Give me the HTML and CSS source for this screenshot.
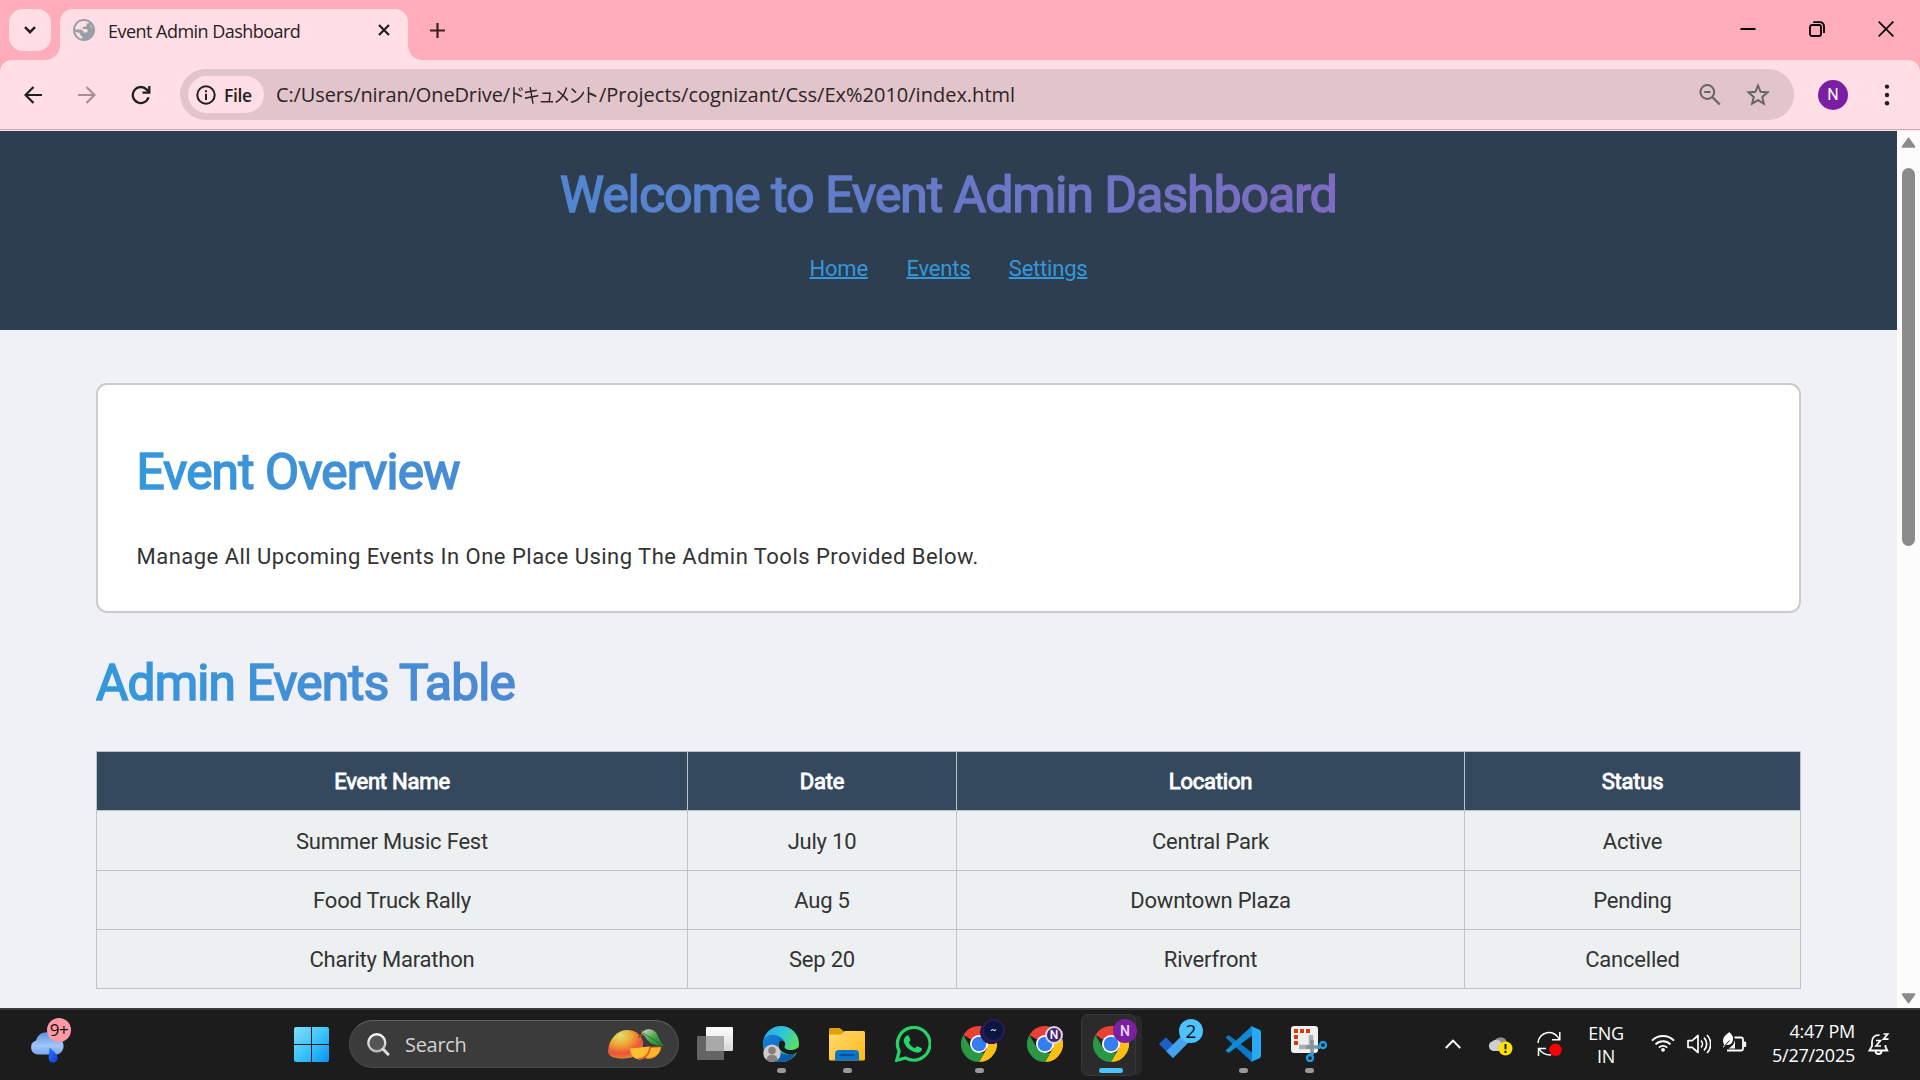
FILE: index.html
```html
<!DOCTYPE html>
<html lang="en">
<head>
<meta charset="utf-8">
<title>Event Admin Dashboard</title>
<link rel="stylesheet" href="styles.css">
</head>
<body>
<svg width="0" height="0" class="defs">
  <defs>
    <linearGradient id="winA" x1="0" y1="0" x2="1" y2="1"><stop offset="0" stop-color="#83dcfb"/><stop offset=".5" stop-color="#3cc5fb"/><stop offset="1" stop-color="#0a93f5"/></linearGradient>
    <linearGradient id="cloud" x1="0" y1="0" x2="0" y2="1"><stop offset="0" stop-color="#5f8fe0"/><stop offset=".6" stop-color="#a3c6f8"/><stop offset="1" stop-color="#7ba6ec"/></linearGradient>
    <linearGradient id="drop" x1="0" y1="0" x2="1" y2="1"><stop offset="0" stop-color="#1d7df5"/><stop offset="1" stop-color="#1636e8"/></linearGradient>
    <radialGradient id="mango" cx=".35" cy=".2" r=".85"><stop offset="0" stop-color="#dfe070"/><stop offset=".4" stop-color="#efa530"/><stop offset=".75" stop-color="#f0503c"/><stop offset="1" stop-color="#e0902c"/></radialGradient>
    <linearGradient id="leaf" x1="0" y1="0" x2="1" y2="1"><stop offset="0" stop-color="#d5dccb"/><stop offset=".5" stop-color="#4aa548"/><stop offset="1" stop-color="#167a2c"/></linearGradient>
    <linearGradient id="edgeA" x1="0" y1="0" x2="1" y2=".6"><stop offset="0" stop-color="#2aa5ec"/><stop offset=".5" stop-color="#30c6d8"/><stop offset="1" stop-color="#63e34a"/></linearGradient>
    <linearGradient id="edgeB" x1="0" y1="0" x2="1" y2="1"><stop offset="0" stop-color="#1486dc"/><stop offset="1" stop-color="#0b4ba0"/></linearGradient>
    <linearGradient id="fold" x1="0" y1="0" x2="1" y2="1"><stop offset="0" stop-color="#ffdc74"/><stop offset="1" stop-color="#fcb914"/></linearGradient>
    <linearGradient id="tvA" x1="0" y1="0" x2="0" y2="1"><stop offset="0" stop-color="#fff"/><stop offset="1" stop-color="#d6d6d6"/></linearGradient>
    <linearGradient id="glass" x1="0" y1="0" x2="0" y2="1"><stop offset="0" stop-color="#fafafa"/><stop offset="1" stop-color="#b9b9b9"/></linearGradient>
    <symbol id="chrome" viewBox="0 0 36 36">
      <path d="M18 18 2.410 9A18 18 0 0 1 33.600 9z" fill="#e94235"/>
      <path d="M33.600 9A18 18 0 0 1 18 36l7.800-13.500L18 9z" fill="#fcc013"/>
      <path d="M18 36A18 18 0 0 1 2.410 9l7.800 13.500L18 27h5.200z" fill="#2a9745"/>
      <circle cx="18" cy="18" r="9" fill="#fff"/><circle cx="18" cy="18" r="7.300" fill="#367df0"/>
    </symbol>
  </defs>
</svg>

<div class="tabstrip">
  <div class="tab-search"><svg width="12" height="8" viewBox="0 0 12 8"><path d="M1 1.200 6 6.200l5-5" fill="none" stroke="#1f1f1f" stroke-width="2.500"/></svg></div>
  <div class="tab">
    <svg class="globe" width="22" height="22" viewBox="0 0 22 22"><circle cx="11" cy="11" r="11" fill="#98a0a6"/><path d="M8.500 2.300C4.500 3.500 2.200 7 2.200 10.500l5.300 0c2 .2 3 1.500 3 3h2.600c1 0 1.700-.6 1.700-1.700 0-1-1-1.800-2-1.800h-3V7.800h2c1.300 0 1.800-.8 1.800-1.700V4.500h1.600c.6 0 .8-.7.700-1.200-2.300-1.200-4.800-1.600-7.400-1zM2.300 12.500c.5 3.700 3.400 6.700 7 7.300v-2.600c-1.300 0-2.100-1-2.100-2.100v-1.100c-1.500 0-3.400-.9-4.900-1.500zM17.500 5.800c-.3 1.500.1 2.600 1.900 2.900l-1.900-2.900z" fill="#ffdfe5"/></svg>
    <span class="tab-title">Event Admin Dashboard</span>
    <svg class="tab-close" width="12" height="12" viewBox="0 0 12 12"><path d="m1 1 10 10M11 1 1 11" stroke="#1f1f1f" stroke-width="2.200"/></svg>
  </div>
  <svg class="tab-new" width="15" height="15" viewBox="0 0 15 15"><path d="M7.500 0v15M0 7.500h15" stroke="#3a2225" stroke-width="2.200"/></svg>
  <div class="win-controls">
    <svg width="16" height="16" viewBox="0 0 16 16"><path d="M.5 8h15" stroke="#000" stroke-width="2"/></svg>
    <svg width="16" height="16" viewBox="0 0 16 16" fill="none" stroke="#000" stroke-width="1.800"><rect x="1" y="4" width="11" height="11" rx="2"/><path d="M4.200 1.200H11a4 4 0 0 1 4 4V12"/></svg>
    <svg width="16" height="16" viewBox="0 0 16 16"><path d="m.7.7 14.600 14.600M15.300.7.7 15.300" stroke="#000" stroke-width="1.700"/></svg>
  </div>
</div>

<div class="toolbar-wrap">
<div class="toolbar">
  <svg class="nav-ic" width="18" height="18" viewBox="0 0 18 18" fill="none" stroke="#1f1f1f" stroke-width="2.200"><path d="M18 9H2M9.500 1 1.500 9l8 8"/></svg>
  <svg class="nav-ic" width="18" height="18" viewBox="0 0 18 18" fill="none" stroke="#a88f95" stroke-width="2.200"><path d="M0 9h16M8.500 1l8 8-8 8"/></svg>
  <svg class="nav-ic reload" width="20" height="20" viewBox="0 0 20 20" fill="none" stroke="#1f1f1f" stroke-width="2.300"><path d="M17.500 12.200A8 8 0 1 1 15.500 4.400L18 7"/><path d="M18.300 1v6.700H11.500"/></svg>
  <div class="omnibox">
    <div class="chip">
      <svg width="20" height="20" viewBox="0 0 20 20"><circle cx="10" cy="10" r="8.700" fill="none" stroke="#1f1f1f" stroke-width="2"/><path d="M9 8.800h2V15H9zM9 5.200h2v2.100H9z" fill="#1f1f1f"/></svg>
      <span class="chip-text">File</span>
    </div>
    <div class="url"><span class="url-a">C:/Users/niran/OneDrive/</span><span class="kana-box"><span class="kana">ドキュメント</span></span><span class="url-b">/Projects/cognizant/Css/Ex%2010/index.html</span></div>
    <svg class="zoom-ic" width="22" height="22" viewBox="0 0 22 22" fill="none" stroke="#656565" stroke-width="2"><circle cx="8.300" cy="8" r="6.900"/><path d="m13.200 13 7.500 7.500" stroke-width="2.400"/><path d="M5.200 8h6.200"/></svg>
    <svg class="star-ic" width="24" height="24" viewBox="0 0 24 24"><path d="m12 2.600 2.600 6.200 6.900.6-5.200 4.500 1.600 6.700L12 17.200l-5.900 3.400 1.600-6.700L2.500 9.400l6.900-.6z" fill="none" stroke="#656565" stroke-width="2"/></svg>
  </div>
  <div class="avatar">N</div>
  <svg class="kebab" width="6" height="22" viewBox="0 0 6 22"><g fill="#1f1f1f"><circle cx="3" cy="2.600" r="2.200"/><circle cx="3" cy="11" r="2.200"/><circle cx="3" cy="19.300" r="2.200"/></g></svg>
</div>
</div>

<div class="viewport">
  <div class="page">
    <header class="site-header">
      <h1 class="title">Welcome to Event Admin Dashboard</h1>
      <nav class="nav"><a>Home</a><a>Events</a><a>Settings</a></nav>
    </header>
    <main class="content">
      <section class="card">
        <h2 class="title">Event Overview</h2>
        <p class="lead">Manage All Upcoming Events In One Place Using The Admin Tools Provided Below.</p>
      </section>
      <h2 class="title table-title">Admin Events Table</h2>
      <table class="events">
        <colgroup><col class="c1"><col class="c2"><col class="c3"><col class="c4"></colgroup>
        <thead><tr><th>Event Name</th><th>Date</th><th>Location</th><th>Status</th></tr></thead>
        <tbody>
          <tr><td>Summer Music Fest</td><td>July 10</td><td>Central Park</td><td>Active</td></tr>
          <tr><td>Food Truck Rally</td><td>Aug 5</td><td>Downtown Plaza</td><td>Pending</td></tr>
          <tr><td>Charity Marathon</td><td>Sep 20</td><td>Riverfront</td><td>Cancelled</td></tr>
        </tbody>
      </table>
    </main>
  </div>
  <div class="scrollbar">
    <svg width="15" height="11" viewBox="0 0 15 11"><path d="M7.500 1.500 13.300 9.800H1.700z" fill="#8b8b8b" stroke="#8b8b8b" stroke-width="2" stroke-linejoin="round"/></svg>
    <div class="thumb"></div>
    <svg class="down" width="15" height="11" viewBox="0 0 15 11"><path d="M7.500 9.500 13.300 1.200H1.700z" fill="#8b8b8b" stroke="#8b8b8b" stroke-width="2" stroke-linejoin="round"/></svg>
  </div>
</div>

<div class="taskbar">
  <div class="weather">
    <svg width="38" height="36" viewBox="0 0 38 36"><path d="M8.500 25.500A7.200 7.200 0 0 1 7 11.500 10.500 10.500 0 0 1 26 8a9 9 0 0 1 2.500 17.500z" fill="url(#cloud)"/><path d="M20.500 18.500c5.500 5 8.200 8 8.200 10.500a4.500 4.500 0 0 1-9 0z" fill="url(#drop)"/></svg>
    <span class="badge badge-pink">9+</span>
  </div>
  <svg class="start" width="35" height="35" viewBox="0 0 35 35"><path d="M2 0h15v17H0V2a2 2 0 0 1 2-2zM18 0h15a2 2 0 0 1 2 2v15H18zM0 18h17v17H2a2 2 0 0 1-2-2zM18 18h17v15a2 2 0 0 1-2 2H18z" fill="url(#winA)"/></svg>
  <div class="search">
    <svg width="23" height="23" viewBox="0 0 23 23" fill="none"><circle cx="9.800" cy="9.800" r="8.500" fill="#555" stroke="url(#glass)" stroke-width="2.400"/><path d="m16.200 16.200 4.800 5" stroke="#dcdcdc" stroke-width="3" stroke-linecap="round"/></svg>
    <span class="search-text">Search</span>
    <svg class="mango" width="57" height="31" viewBox="0 0 57 31"><path d="M0 22C1 9 10 1 19 1c9 0 16 6 16 14 0 10-9 14.500-20 14.500C5 29.500 0 27 0 22z" fill="url(#mango)"/><path d="M34 1v5l-4 2" fill="none" stroke="#8d5a24" stroke-width="1.600"/><path d="M34 4C38-2 46 0 49 5c2 5 4 9 7 12-10 0-15-3-18-8-1-2-3-3-4-5z" fill="url(#leaf)"/><path d="m35 4 19 12" stroke="#23662a" stroke-width=".8"/><path d="M35 18.500 53 18c-1 7-6 11.500-13 11.500-5 0-5-7-5-11z" fill="#fdb52c" stroke="#e8731d" stroke-width=".8"/><path d="m22 19.500 20-2c0 7-5 12.500-12 12.500-4 0-8-5-8-10.500z" fill="#ffbd32"/><path d="M42 17.500c0 7-5 12.500-12 12.500" fill="none" stroke="#e55b25" stroke-width="1.800"/></svg>
  </div>
  <div class="apps">
    <div class="app"><svg width="36" height="36" viewBox="0 0 36 36"><rect x="0" y="10" width="27" height="24" rx="1" fill="#646464"/><rect x="9" y="1" width="27" height="24" rx="1" fill="url(#tvA)"/><path d="M9 10h18v15H9z" fill="#a9a9a9"/></svg></div>
    <div class="app running"><svg width="36" height="36" viewBox="0 0 36 36"><circle cx="18" cy="18" r="18" fill="url(#edgeA)"/><path d="M0 18c0-7 6-10 12-9 5 .7 8 4 9 6-4-1-6 1-6 5 0 7 7 9 12 8 3 0 5-2 6-1.500C30 33 24 36 18 36 8 36 0 28 0 18z" fill="url(#edgeB)"/><path d="M18 14.500c4 0 5 3 3.500 6 0 2.500 3 4 8 3.500 2.500-.3 4.500-1.500 6-3l1 4-4.500 2.500c-5 1.500-11 .5-15-3.500-2-3-2-8.500 1-9.500z" fill="#1c1c1c"/><circle cx="9" cy="27.200" r="8.700" fill="#cfcdcb"/><circle cx="9" cy="24.500" r="3.800" fill="#84807d"/><path d="M3.500 34c0-7 11-7 11 0a9 9 0 0 1-11 0z" fill="#84807d"/></svg></div>
    <div class="app running"><svg width="36" height="36" viewBox="0 0 36 36"><path d="M0 3.500A1.500 1.500 0 0 1 1.500 2h9.200L15 5.500h19.500A1.500 1.500 0 0 1 36 7v10H0z" fill="#e2a008"/><path d="M0 8.500h12l4-3.500h18.500A1.500 1.500 0 0 1 36 6.500V33a1.500 1.500 0 0 1-1.500 1.500h-33A1.500 1.500 0 0 1 0 33z" fill="url(#fold)"/><path d="M6 34.500V28a4 4 0 0 1 4-4h16a4 4 0 0 1 4 4v6.500z" fill="#0c74c9"/><path d="M11 29h14" stroke="#05427f" stroke-width="1.700" stroke-linecap="round"/></svg></div>
    <div class="app"><svg width="36" height="36" viewBox="0 0 36 36"><path d="M1.700 34.300 4.200 25.200A16.300 16.300 0 1 1 10.500 31.900z" fill="none" stroke="#25d366" stroke-width="3.200"/><path d="M11.500 9.800c.7-.7 2-.6 2.400.3l1.500 3.500c.2.600 0 1.100-1.600 2.900 1.400 2.700 3.300 4.500 6.200 5.700 1.400-1.600 1.900-2.300 2.600-2l3.700 1.800c.8.400.9 1 .4 2.200-.8 2-3.400 2.800-5.200 2.400-6.300-1.300-10.700-5.200-12.600-10.300-.8-2.300.7-5 2.600-6.500z" fill="#25d366"/></svg></div>
    <div class="app running"><svg width="36" height="36"><use href="#chrome"/></svg><span class="profile dark">~</span></div>
    <div class="app"><svg width="36" height="36"><use href="#chrome"/></svg><span class="profile ring">N</span></div>
    <div class="app active"><svg width="36" height="36"><use href="#chrome"/></svg><span class="profile purple">N</span></div>
    <div class="app"><svg width="36" height="36" viewBox="0 0 36 36"><path d="m0 18 6.800-6.800L20.800 25.200 14 32z" fill="#1e5fc4"/><path d="m7.200 25.200 21-21L35 11 14 32z" fill="#45a3ee"/></svg><span class="badge badge-blue">2</span></div>
    <div class="app running"><svg width="36" height="36" viewBox="0 0 36 36"><path d="m.5 11.500 3-2.500L27 26.500V36z" fill="#0d78c8"/><path d="M.5 24.500 27 0v9.500L3.500 27z" fill="#1390df"/><path d="m3.500 27 6-4.500L27 9.500V0L12.500 13.400z" fill="#0f86d2" opacity=".6"/><path d="M26 0l8.500 3.800A2.500 2.500 0 0 1 36 6v24a2.500 2.500 0 0 1-1.500 2.200L26 36l1-1.500v-33z" fill="#29a9f4"/></svg></div>
    <div class="app running"><svg width="38" height="36" viewBox="0 0 38 36"><rect x="1" y="0" width="27" height="27" rx="3" fill="#eef0f2"/><path d="M4 3h4v4H4zM10 3h4v4h-4zM16 3h4v4h-4zM4 9h4v4H4zM4 15h4v4H4z" fill="#d83b01"/><path d="M9 21h12V9" fill="none" stroke="#a9afb5" stroke-width="4.500"/><path d="M22 14v15M16 21h14" stroke="#8b9197" stroke-width="3.500"/><circle cx="33" cy="19" r="3" fill="none" stroke="#1d9fe8" stroke-width="2.300"/><circle cx="20" cy="32" r="3" fill="none" stroke="#1d9fe8" stroke-width="2.300"/><path d="m30 21-3 1M22 29l1-3" stroke="#1d9fe8" stroke-width="2.200"/></svg></div>
  </div>
  <div class="tray">
    <svg width="16" height="10" viewBox="0 0 16 10"><path d="m.8 9 7.200-7.400L15.200 9" fill="none" stroke="#fff" stroke-width="2"/></svg>
    <svg class="tray-cloud" width="25" height="22" viewBox="0 0 25 22"><path d="M6 9a6.500 6.500 0 0 1 12.500-1.500A4 4 0 0 1 18 15H9z" fill="#8d8d8d"/><path d="M5 17A5 5 0 0 1 4 7.500 6 6 0 0 1 13 8l2 9z" fill="#cfcfcf"/><circle cx="17.500" cy="14.500" r="7" fill="#ffe100"/><path d="M17.500 10v5.300M17.500 16.700v2.200" stroke="#1c1c1c" stroke-width="2"/></svg>
    <svg class="tray-sync" width="25" height="26" viewBox="0 0 25 26" fill="none"><path d="M1 12A11 11 0 0 1 22 8M22.800 1v7.800H15M1.500 25v-7.500h7.500M2 17.500c2 4 6 6.500 12 6.500" stroke="#fff" stroke-width="1.500"/><circle cx="18.500" cy="18.800" r="6.200" fill="#f00"/></svg>
    <div class="lang">ENG<br>IN</div>
    <svg class="tray-wifi" width="24" height="18" viewBox="0 0 24 18" fill="none" stroke="#fff" stroke-width="1.900"><path d="M1 6.600a15.500 15.500 0 0 1 22 0M4.500 10.300a10.600 10.600 0 0 1 15 0M7.900 13.600a5.800 5.800 0 0 1 8.200 0"/><circle cx="12" cy="15.800" r="1.900" fill="#fff" stroke="none"/></svg>
    <svg class="tray-vol" width="24" height="20" viewBox="0 0 24 20" fill="none" stroke="#fff" stroke-width="1.700"><path d="M1 6.700h4.200L11 1.500v17l-5.800-5.200H1z" stroke-linejoin="round"/><path d="M14 6.500a5 5 0 0 1 0 7M17 3.600a9 9 0 0 1 0 12.800M20 1a13 13 0 0 1 0 18"/></svg>
    <svg class="tray-bat" width="25" height="20" viewBox="0 0 25 20" fill="none"><path d="M12.500 5.500H19a2 2 0 0 1 2 2v9a2 2 0 0 1-2 2H5" stroke="#fff" stroke-width="1.800"/><path d="M21.500 10h2.200v4.500h-2.200" fill="#fff" stroke="#fff" stroke-width="1"/><path d="M7.500 0c1 2 3.500 3 3.500 6.500 0 4-2 6.500-5.500 6.500H3.800L1 16l1-3.500C-.5 8 1.500 4 7.500 0z" fill="#fff"/><path d="m2.500 14 5-5.500" stroke="#1c1c1c"/><path d="M13 8v8.500H6.500C10 14.500 12 12.500 13 8z" fill="#fff"/></svg>
    <div class="clock">4:47 PM<br>5/27/2025</div>
    <div class="bell"><svg width="22" height="24" viewBox="0 0 22 24" fill="none" stroke="#fff" stroke-width="1.800"><path d="M11.500 3.200C7 2.500 4 5.500 4 9.500V14l-2.500 4.500h17.800L17.500 15v-2M7.500 19a3 3 0 0 0 6 0"/><path d="M8 8.500h4.500L8 14h5M15.500 2h4.200l-4.200 5.200h5" stroke-width="1.700"/></svg></div>
  </div>
</div>
</body>
</html>
```
FILE: styles.css
```css
* { box-sizing: border-box; }
html, body { margin: 0; height: 100%; }
body {
  width: 1920px; height: 1080px; overflow: hidden;
  display: flex; flex-direction: column;
  font-family: Roboto, sans-serif; color: #333;
  background: #f0f1f6;
}
svg { display: block; flex: none; }
.defs { position: absolute; }

/* tab strip */
.tabstrip {
  height: 60px; flex: none; background: #ffadbb;
  display: flex; padding: 9px 0 0 9px;
  font-family: "Open Sans", sans-serif;
}
.tab-search {
  width: 42px; height: 42px; border-radius: 14px; background: #ffdfe5;
  display: flex; align-items: center; justify-content: center; margin-right: 9px;
}
.tab {
  position: relative; width: 348px; height: 51px; background: #ffdfe5;
  border-radius: 13px 13px 0 0; display: flex; padding: 10px 18px 0 13px;
}
.tab::before, .tab::after {
  content: ""; position: absolute; bottom: 0; width: 14px; height: 14px;
}
.tab::before { left: -14px; background: radial-gradient(circle at 0 0, transparent 13.500px, #ffdfe5 14px); }
.tab::after { right: -14px; background: radial-gradient(circle at 100% 0, transparent 13.500px, #ffdfe5 14px); }
.tab-title { margin-left: 13px; font-size: 18px; line-height: 24px; letter-spacing: -0.530px; color: #2a2023; white-space: nowrap; }
.tab-close { margin: 5px 0 0 auto; }
.tab-new { margin: 14px 0 0 22px; }
.win-controls { margin: 12px 26px 0 auto; display: flex; gap: 53px; }

/* toolbar */
.toolbar-wrap { flex: none; background: #ffadbb; }
.toolbar {
  height: 71px; background: #ffdfe5; border-radius: 12px 12px 0 0;
  display: flex; align-items: center; padding: 0 0 1px 24px;
  border-bottom: 1px solid #ffdfe5;
  box-shadow: inset 0 -1px 0 #c9afb5;
  font-family: "Open Sans", sans-serif;
}
.nav-ic { margin-right: 36px; }
.nav-ic.reload { margin: 0 29px 0 -1px; }
.omnibox {
  width: 1614px; height: 51px; border-radius: 26px; background: #e1c5ca;
  display: flex; align-items: center; padding: 0 24px 0 8px;
}
.chip {
  width: 76px; height: 37px; border-radius: 19px; background: #ffdfe5;
  display: flex; align-items: center; padding-left: 8px; gap: 8px;
}
.chip-text { font-size: 17.500px; font-weight: 600; color: #1f1f1f; letter-spacing: -0.400px; line-height: 24px; }
.url { margin-left: 12px; font-size: 20px; line-height: 28px; color: #2c2427; white-space: nowrap; display: flex; align-items: center; }
.url-a { letter-spacing: -0.130px; }
.url-b { letter-spacing: 0; }
.kana-box { width: 89px; height: 28px; }
.kana { display: inline-block; font-family: "Noto Sans CJK JP", sans-serif; font-size: 20px; font-feature-settings: "palt"; transform: scaleX(0.86); transform-origin: 0 50%; }
.zoom-ic { margin-left: auto; }
.star-ic { margin-left: 25px; }
.avatar {
  margin-left: 24px; width: 30px; height: 30px; border-radius: 50%; background: #7b1fa2;
  color: #fff; font: 400 16px/30px Roboto, sans-serif; text-align: center;
}
.kebab { margin-left: 36px; }

/* page */
.viewport { height: 877px; flex: none; display: flex; overflow: hidden; }
.page { width: 1897px; background: #f0f1f6; font-size: 22px; letter-spacing: -0.210px; }
.site-header { height: 199px; background: #2c3e50; padding: 35px 27px 0; text-align: center; }
.title {
  margin: 0; font-size: 49.500px; line-height: 58px; font-weight: 400; letter-spacing: -0.770px;
  background: linear-gradient(to right, #3498db, #9b59b6);
  -webkit-background-clip: text; background-clip: text; color: transparent;
  -webkit-text-stroke: 1.700px transparent;
}
.nav { margin-top: 32px; display: flex; justify-content: center; gap: 38.500px; line-height: 26px; }
.nav a { color: #3498db; text-decoration: underline; text-decoration-thickness: 2px; }
.content { padding: 53px 96px 0 96px; }
.card { height: 230px; background: #fff; border: 2px solid #ccc; border-radius: 11px; padding: 58px 38px 0 38.500px; }
.lead { margin: 43px 0 0; line-height: 26px; letter-spacing: 0.480px; }
.table-title { margin-top: 41px; }
.events { margin-top: 39px; width: 1704px; table-layout: fixed; border-collapse: collapse; background: #ecf0f1; }
.c1 { width: 591px; } .c2 { width: 269px; } .c3 { width: 508px; } .c4 { width: 336px; }
.events th, .events td { height: 59px; padding: 2px 0 0; border: 1px solid #bdc3c7; text-align: center; vertical-align: middle; font-weight: 400; line-height: 26px; }
.events tbody tr:first-child td { height: 60px; }
.events th { background: #34495e; color: #fff; -webkit-text-stroke: 0.900px #fff; }

.scrollbar { width: 23px; background: #fcfcfc; display: flex; flex-direction: column; align-items: center; padding: 6px 0 4px; }
.thumb { width: 13px; height: 378px; margin-top: 20px; border-radius: 7px; background: #8b8b8b; }
.down { margin-top: auto; }

/* taskbar */
.taskbar {
  height: 72px; flex: none; background: #1c1c1c; border-top: 2px solid #3b3b3b;
  display: flex; align-items: flex-start; font-family: "Open Sans", sans-serif; color: #fff;
}
.weather { position: relative; margin: 19px 0 0 29px; width: 38px; }
.badge { position: absolute; width: 24px; height: 24px; border-radius: 50%; color: #111; font-size: 17px; line-height: 24px; text-align: center; }
.badge-pink { left: 18px; top: -11px; background: #ff99a4; letter-spacing: -0.5px; }
.badge-blue { left: 35px; top: 9px; background: #4cc2ff; font-size: 19px; }
.start { margin: 17px 0 0 227px; }
.search {
  width: 330px; height: 48px; margin: 10px 0 0 20px; border-radius: 24px;
  background: #3b3b3b; border: 1px solid #4c4c4c; border-top-color: #626262;
  display: flex; align-items: center; padding: 0 13px 0 17px;
}
.search-text { margin-left: 15px; padding-top: 1px; font-size: 20px; line-height: 28px; color: #d2d2d2; letter-spacing: -0.3px; }
.mango { margin-left: auto; }
.apps { display: flex; margin-left: 3px; }
.app { position: relative; width: 66px; height: 70px; display: flex; justify-content: center; padding-top: 16px; }
.app > svg { position: relative; }
.running::after {
  content: ""; position: absolute; left: 29px; top: 58px; width: 9px; height: 5px; border-radius: 3px; background: #9a9a9a;
}
.active::before {
  content: ""; position: absolute; left: 3px; top: 4px; width: 53px; height: 60px; border-radius: 7px;
  background: #2b2b2b; border: 1px solid #383838; box-shadow: 7px 0 0 -1px #282828;
}
.active::after {
  content: ""; position: absolute; left: 21px; top: 58px; width: 24px; height: 5px; border-radius: 3px; background: #4cc2ff;
}
.profile { position: absolute; border-radius: 50%; text-align: center; font-family: Roboto, sans-serif; font-weight: 500; color: #fff; }
.dark { left: 36px; top: 9px; width: 23px; height: 23px; background: #0a1640; border: 2px solid #2c1c50; font-size: 9px; line-height: 19px; box-shadow: -2px 2px 0 #24174c; }
.ring { left: 33px; top: 16px; width: 18px; height: 18px; background: #42246f; border: 2px solid #ddd5e8; font-size: 12px; line-height: 14px; }
.purple { left: 35px; top: 9px; width: 24px; height: 24px; background: #7b1fa2; font-size: 14px; line-height: 24px; color: #ecd9f3; }

.tray { display: flex; align-items: flex-start; margin-left: 103px; }
.tray > svg:first-child { margin-top: 29px; }
.tray-cloud { margin: 24px 0 0 27px; }
.tray-sync { margin: 21px 0 0 24px; }
.lang { width: 60px; margin: 12px 0 0 14px; font-size: 18px; line-height: 23px; text-align: center; letter-spacing: -0.3px; }
.tray-wifi { margin: 24px 0 0 15px; }
.tray-vol { margin: 24px 0 0 12px; }
.tray-bat { margin: 22px 0 0 11px; }
.clock { width: 100px; margin: 9px 0 0 8px; font-size: 18px; line-height: 24px; text-align: right; letter-spacing: -0.250px; }
.bell { margin: 22px 0 0 13px; }
```
